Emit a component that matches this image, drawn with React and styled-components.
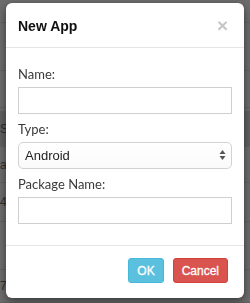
import React from 'react';
import styled, { createGlobalStyle } from 'styled-components';

const GlobalStyle = createGlobalStyle`
  html, body {
    margin: 0;
    padding: 0;
    width: 250px;
    height: 303px;
    overflow: hidden;
    background: #6d6d6d;
  }
  * {
    box-sizing: border-box;
  }
`;

const rows = [
  { h: 23, text: '' },
  { h: 48, text: '' },
  { h: 37, text: '' },
  { h: 4, text: '' },
  { h: 35, text: 'Sb', dark: true },
  { h: 36, text: 'al' },
  { h: 39, text: '4c' },
  { h: 48, text: '' },
  { h: 33, text: '70' },
];

class App extends React.Component {
  render() {
    return (
      <>
        <GlobalStyle />
        <PageStyled>
          {rows.map((row, i) => (
            <PageRowStyled key={i} $h={row.h} $dark={row.dark}>
              {row.text}
            </PageRowStyled>
          ))}
        </PageStyled>
        <OverlayStyled>
          <ModalStyled>
            <HeaderStyled>
              <TitleStyled>New App</TitleStyled>
              <CloseStyled>×</CloseStyled>
            </HeaderStyled>
            <BodyStyled>
              <LabelStyled>Name:</LabelStyled>
              <InputStyled type="text" />
              <LabelStyled>Type:</LabelStyled>
              <SelectWrapStyled>
                <SelectStyled defaultValue="Android">
                  <option>Android</option>
                  <option>iOS</option>
                </SelectStyled>
                <ArrowsStyled>
                  <svg width="7" height="12" viewBox="0 0 7 12">
                    <path d="M3.5 1 L6.5 5 L0.5 5 Z" fill="#555" />
                    <path d="M3.5 11 L6.5 7 L0.5 7 Z" fill="#555" />
                  </svg>
                </ArrowsStyled>
              </SelectWrapStyled>
              <LabelStyled>Package Name:</LabelStyled>
              <InputStyled type="text" />
            </BodyStyled>
            <FooterStyled>
              <ButtonStyled $bg="#5bc0de" $border="#46b8da">OK</ButtonStyled>
              <ButtonStyled $bg="#d9534f" $border="#d43f3a">Cancel</ButtonStyled>
            </FooterStyled>
          </ModalStyled>
        </OverlayStyled>
      </>
    );
  }
}

const PageStyled = styled.div`
  display: flex;
  flex-direction: column;
  width: 250px;
  height: 303px;
  font-family: "Liberation Sans", Arial, sans-serif;
  font-size: 12px;
  color: #2e2e2e;
`;

const PageRowStyled = styled.div`
  height: ${p => p.$h}px;
  flex-shrink: 0;
  border-bottom: 1px solid #626262;
  background: ${p => (p.$dark ? '#616161' : 'transparent')};
  display: flex;
  align-items: center;
`;

const OverlayStyled = styled.div`
  position: fixed;
  inset: 0;
  padding: 3px 6px 5px 6px;
  display: flex;
  align-items: flex-start;
`;

const ModalStyled = styled.div`
  width: 238px;
  height: 295px;
  background: #fff;
  border-radius: 6px;
  box-shadow: 0 3px 9px rgba(0, 0, 0, 0.5);
  display: flex;
  flex-direction: column;
`;

const HeaderStyled = styled.div`
  height: 45px;
  flex-shrink: 0;
  padding: 0 16px 0 12px;
  border-bottom: 1px solid #e5e5e5;
  display: flex;
  align-items: center;
  justify-content: space-between;
`;

const TitleStyled = styled.div`
  font-family: "Liberation Sans", Arial, sans-serif;
  font-weight: bold;
  font-size: 14px;
  color: #111;
  margin-top: 1px;
`;

const CloseStyled = styled.div`
  font-family: "Liberation Sans", Arial, sans-serif;
  font-weight: bold;
  font-size: 19px;
  line-height: 1;
  color: #c6c6c6;
`;

const BodyStyled = styled.div`
  padding: 11px 12px 21px 12px;
  display: flex;
  flex-direction: column;
  border-bottom: 1px solid #e5e5e5;
`;

const LabelStyled = styled.label`
  font-family: Lato, "Open Sans", sans-serif;
  font-size: 13px;
  color: #3a3a3a;
  line-height: 17px;
  margin: 7px 0 4px 0;
`;

const InputStyled = styled.input`
  width: 214px;
  height: 27px;
  border: 1px solid #cfcfcf;
  border-radius: 0;
  background: #fff;
  outline: none;
  padding: 0 6px;
`;

const SelectWrapStyled = styled.div`
  position: relative;
  width: 214px;
  height: 27px;
`;

const SelectStyled = styled.select`
  appearance: none;
  width: 100%;
  height: 100%;
  border: 1px solid #d2d2d2;
  border-radius: 5px;
  background: linear-gradient(#ffffff, #fafafa);
  font-family: "Liberation Sans", Arial, sans-serif;
  font-size: 13px;
  color: #222;
  padding: 0 6px;
  outline: none;
`;

const ArrowsStyled = styled.div`
  position: absolute;
  right: 6px;
  top: 7px;
  pointer-events: none;
  display: flex;
`;

const FooterStyled = styled.div`
  display: flex;
  justify-content: flex-end;
  gap: 9px;
  padding: 12px 16px 0 0;
`;

const ButtonStyled = styled.button`
  height: 25px;
  padding: 0 8px;
  border: 1px solid ${p => p.$border};
  border-radius: 3px;
  background: ${p => p.$bg};
  color: #fff;
  font-family: "Liberation Sans", Arial, sans-serif;
  font-size: 12px;
  -webkit-text-stroke: 0.3px #fff;
`;

export default App;
